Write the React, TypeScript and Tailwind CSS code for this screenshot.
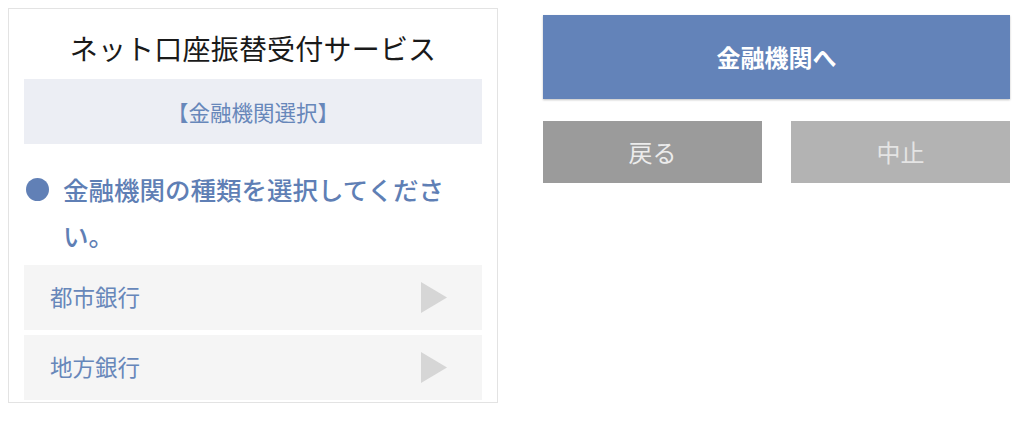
const font = { fontFamily: '"Noto Sans CJK JP", "Noto Sans", sans-serif' };

function Triangle() {
  return (
    <svg width="26" height="31" viewBox="0 0 26 31" className="shrink-0">
      <polygon points="0,0 26,15.5 0,31" fill="#d6d6d6" />
    </svg>
  );
}

function BankRow({ label }: { label: string }) {
  return (
    <div className="h-[65px] shrink-0 bg-[#f5f5f5] flex items-center justify-between pl-[26px] pr-[35px]">
      <span className="text-[22.5px] text-[#6787ba] leading-none -mt-[3px]">{label}</span>
      <Triangle />
    </div>
  );
}

export default function App() {
  return (
    <div className="w-[1024px] h-[427px] bg-white flex items-start pl-[8px] pt-[8px]" style={font}>
      <div className="w-[490px] h-[395px] border border-[#e3e3e3] overflow-hidden flex flex-col px-[15px]">
        <div className="h-[70px] pt-[8px] shrink-0 flex items-center justify-center">
          <h1 className="text-[28px] text-[#1a1a1a] leading-none tracking-[0.2px]">ネット口座振替受付サービス</h1>
        </div>
        <div className="h-[65px] shrink-0 bg-[#eceef4] flex items-center justify-center">
          <span className="text-[21.5px] text-[#6787ba] leading-none">【金融機関選択】</span>
        </div>
        <div className="flex items-start mt-[22px] mb-[7px] shrink-0">
          <div className="w-[23px] h-[23px] rounded-full bg-[#6180b6] ml-[2px] mt-[12px] shrink-0" />
          <p className="ml-[14px] w-[392px] text-[25.5px] font-medium leading-[46px] text-[#5f7fb5]">
            金融機関の種類を選択してください。
          </p>
        </div>
        <div className="flex flex-col gap-[5px]">
          <BankRow label="都市銀行" />
          <BankRow label="地方銀行" />
        </div>
      </div>

      <div className="ml-[45px] mt-[7px] w-[467px] flex flex-col">
        <button className="h-[84px] bg-[#6383b9] text-white text-[24px] font-bold shadow-[0_1px_2px_rgba(0,0,0,0.25)] flex items-center justify-center">
          金融機関へ
        </button>
        <div className="mt-[22px] flex gap-[29px]">
          <button className="w-[219px] h-[62px] bg-[#9b9b9b] text-[#ececec] text-[24px] flex items-center justify-center">
            戻る
          </button>
          <button className="w-[219px] h-[62px] bg-[#b3b3b3] text-[#e4e4e4] text-[24px] flex items-center justify-center">
            中止
          </button>
        </div>
      </div>
    </div>
  );
}
